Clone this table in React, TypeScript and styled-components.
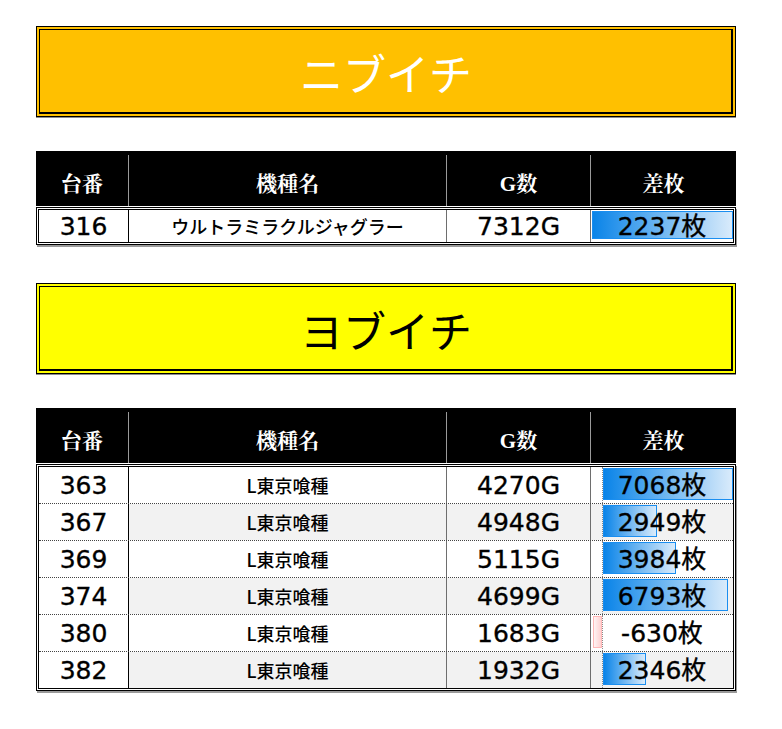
import styled, { createGlobalStyle } from "styled-components";

const GlobalStyle = createGlobalStyle`
  html, body {
    margin: 0;
    padding: 0;
    background: #fff;
  }
  body {
    font-family: "DejaVu Sans", "Noto Sans CJK JP", sans-serif;
    color: #000;
  }
`;

const Page = styled.div`
  width: 700px;
  padding: 26px 0 30px 36px;
`;

const Banner = styled.div<{ $bg: string; $fg: string }>`
  box-sizing: border-box;
  height: 91px;
  margin-bottom: 34px;
  display: flex;
  align-items: center;
  justify-content: center;
  background: ${(p) => p.$bg};
  color: ${(p) => p.$fg};
  border: 1px solid #000;
  box-shadow: inset 0 0 0 2px ${(p) => p.$bg}, inset 0 0 0 3px #000, inset -1px -1px 0 3px #000,
    0 1px 0 #8c8c8c;
  font-family: "Noto Sans CJK JP", sans-serif;
  font-size: 43px;
`;

const Table = styled.div`
  margin-bottom: 38px;
`;

const Head = styled.div`
  box-sizing: border-box;
  display: grid;
  grid-template-columns: 92px 318px 144px 146px;
  height: 55px;
  padding-top: 4px;
  margin-bottom: 1px;
  background: #000;
`;

const HeadCell = styled.div`
  display: flex;
  align-items: center;
  justify-content: center;
  padding-top: 3px;
  color: #fff;
  font-family: "Liberation Serif", "Noto Serif CJK JP", "Noto Sans CJK JP", serif;
  font-size: 21px;
  font-weight: 700;
  & + & {
    border-left: 1px solid #9a9a9a;
  }
`;

const Body = styled.div`
  border: 3px double #000;
  box-shadow: 1px 2px 0 #9a9a9a;
`;

const Row = styled.div<{ $h: number }>`
  display: grid;
  grid-template-columns: 89px 318px 144px 143px;
  height: ${(p) => p.$h}px;
  & + & {
    border-top: 1px dotted #444;
  }
`;

const Cell = styled.div<{ $alt?: boolean; $sep?: string; $name?: boolean }>`
  display: flex;
  align-items: center;
  justify-content: center;
  line-height: 1;
  background: ${(p) => (p.$alt ? "#f2f2f2" : "#fff")};
  border-left: ${(p) => (p.$sep ? `1px solid ${p.$sep}` : "none")};
  font-family: ${(p) =>
    p.$name ? `"Noto Sans CJK JP", sans-serif` : `"DejaVu Sans", "Noto Sans CJK JP", sans-serif`};
  font-size: ${(p) => (p.$name ? "18px" : "25px")};
  font-weight: ${(p) => (p.$name ? 500 : 400)};
  -webkit-text-stroke: ${(p) => (p.$name ? "0" : "0.35px #000")};
`;

const BarCell = styled.div<{ $alt?: boolean; $neg: number }>`
  display: grid;
  grid-template-columns: ${(p) => p.$neg}px 1fr;
  background: ${(p) => (p.$alt ? "#f2f2f2" : "#fff")};
  border-left: 1px solid #6e6e6e;
`;

const NegZone = styled.div<{ $axis: boolean }>`
  grid-area: 1 / 1;
  display: flex;
  justify-content: flex-end;
  padding: 1px 0 3px 2px;
  border-right: ${(p) => (p.$axis ? "1px dotted #8a8a8a" : "none")};
`;

const PosZone = styled.div`
  grid-area: 1 / 2;
  display: flex;
  padding: 1px 0 3px;
`;

const Bar = styled.div<{ $neg?: boolean }>`
  box-sizing: border-box;
  height: 100%;
  border: 1px solid ${(p) => (p.$neg ? "#ffb8b8" : "#1a8ef0")};
  background: ${(p) =>
    p.$neg
      ? "linear-gradient(to left, #ffd2d2, #fff3f3)"
      : "linear-gradient(to right, #0a84e8, #d9ebfb)"};
`;

const BarText = styled.div`
  grid-area: 1 / 1 / 2 / 3;
  align-self: center;
  justify-self: center;
  position: relative;
  line-height: 1;
  font-size: 25px;
  -webkit-text-stroke: 0.35px #000;
`;

interface Machine {
  no: number;
  name: string;
  games: number;
  diff: number;
}

const nibuichi: Machine[] = [{ no: 316, name: "ウルトラミラクルジャグラー", games: 7312, diff: 2237 }];

const yobuichi: Machine[] = [
  { no: 363, name: "L東京喰種", games: 4270, diff: 7068 },
  { no: 367, name: "L東京喰種", games: 4948, diff: 2949 },
  { no: 369, name: "L東京喰種", games: 5115, diff: 3984 },
  { no: 374, name: "L東京喰種", games: 4699, diff: 6793 },
  { no: 380, name: "L東京喰種", games: 1683, diff: -630 },
  { no: 382, name: "L東京喰種", games: 1932, diff: 2346 },
];

function MachineTable({ rows, rowHeight }: { rows: Machine[]; rowHeight: number }) {
  const max = Math.max(...rows.map((r) => r.diff), 0);
  const min = Math.min(...rows.map((r) => r.diff), 0);
  const hasNeg = min < 0;
  return (
    <Table>
      <Head>
        <HeadCell>台番</HeadCell>
        <HeadCell>機種名</HeadCell>
        <HeadCell>G数</HeadCell>
        <HeadCell>差枚</HeadCell>
      </Head>
      <Body>
        {rows.map((r, i) => {
          const alt = rows.length > 1 && i % 2 === 1;
          return (
            <Row key={r.no} $h={rowHeight}>
              <Cell>{r.no}</Cell>
              <Cell $alt={alt} $sep="#000" $name>
                {r.name}
              </Cell>
              <Cell $alt={alt} $sep="#6e6e6e">
                {r.games}G
              </Cell>
              <BarCell $alt={alt} $neg={hasNeg ? 12 : 1}>
                <NegZone $axis={hasNeg}>
                  {r.diff < 0 && <Bar $neg style={{ width: `${(r.diff / min) * 100}%` }} />}
                </NegZone>
                <PosZone>
                  {r.diff > 0 && <Bar style={{ width: `${(r.diff / max) * 100}%` }} />}
                </PosZone>
                <BarText>{r.diff}枚</BarText>
              </BarCell>
            </Row>
          );
        })}
      </Body>
    </Table>
  );
}

export default function App() {
  return (
    <>
      <GlobalStyle />
      <Page>
        <Banner $bg="#ffc000" $fg="#fff">
          ニブイチ
        </Banner>
        <MachineTable rows={nibuichi} rowHeight={32} />
        <Banner $bg="#ffff00" $fg="#000">
          ヨブイチ
        </Banner>
        <MachineTable rows={yobuichi} rowHeight={36} />
      </Page>
    </>
  );
}
